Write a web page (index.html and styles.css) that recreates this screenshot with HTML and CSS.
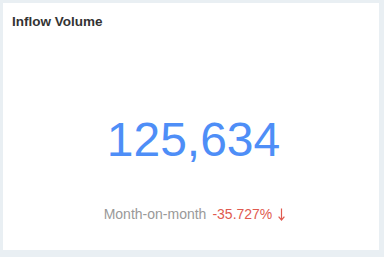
FILE: index.html
```html
<!DOCTYPE html>
<html>
<head>
<meta charset="utf-8">
<link rel="stylesheet" href="styles.css">
</head>
<body>
<div class="card">
  <div class="title">Inflow Volume</div>
  <div class="value">125,634</div>
  <div class="compare">
    <span class="label">Month-on-month</span>
    <span class="delta">-35.727%<svg class="arrow" width="7" height="13" viewBox="0 0 7 13"><path d="M3.5 0.5V12M0.6 8.6L3.5 12L6.4 8.6" fill="none" stroke="#e05a4f" stroke-width="1.2"/></svg></span>
  </div>
</div>
</body>
</html>
```
FILE: styles.css
```css
html, body { margin: 0; padding: 0; }
body {
  background: #e9eff3;
  padding: 3px;
  width: 384px;
  height: 257px;
  box-sizing: border-box;
  font-family: "Liberation Sans", Arial, sans-serif;
}
.card {
  background: #fff;
  width: 376px;
  height: 247px;
  box-sizing: border-box;
  padding: 11px 9px 0;
  display: flex;
  flex-direction: column;
}
.title {
  font-size: 13.5px;
  font-weight: bold;
  line-height: 16px;
  color: #333;
}
.value {
  margin-top: 82px;
  font-size: 48px;
  line-height: 56px;
  color: #4e8ef7;
  text-align: center;
  padding-left: 5px;
}
.compare {
  margin-top: 36px;
  font-size: 14px;
  line-height: 20px;
  display: flex;
  justify-content: center;
  align-items: baseline;
  padding-left: 7px;
}
.label { color: #999; }
.delta {
  color: #e05a4f;
  margin-left: 6px;
  display: inline-flex;
  align-items: baseline;
}
.arrow {
  margin-left: 6px;
  align-self: center;
  position: relative;
  top: 0;
}
```
